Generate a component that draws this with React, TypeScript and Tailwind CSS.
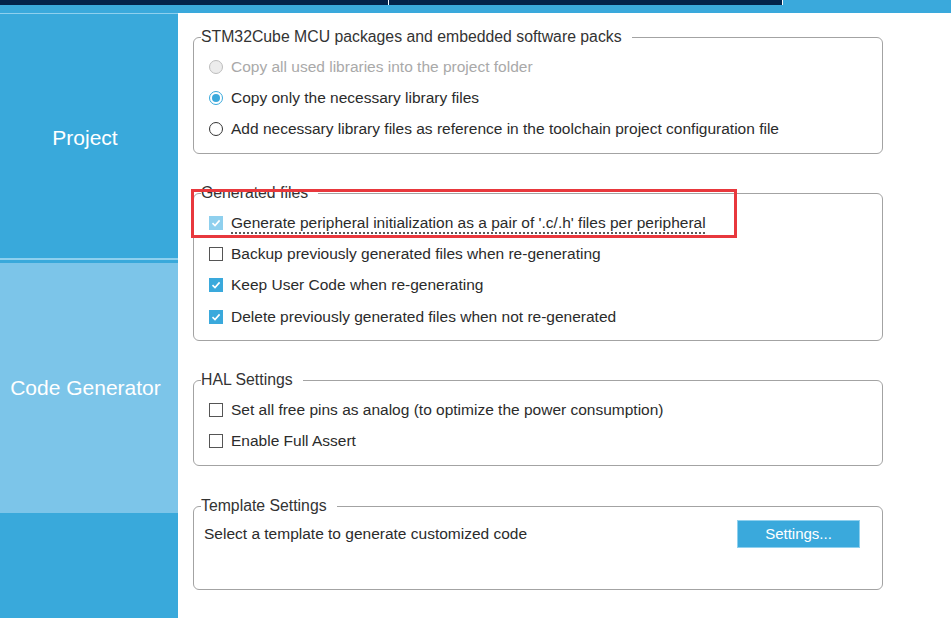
import React from "react";

/* ---------- small controls ---------- */
const Radio = ({ state }: { state: "off" | "on" | "disabled" }) => {
  if (state === "disabled")
    return <span className="w-[14px] h-[14px] rounded-full border border-[#bdbdbd] bg-[#ececec] shrink-0" />;
  if (state === "on")
    return (
      <span className="w-[14px] h-[14px] rounded-full border border-[#3aa9dc] bg-white shrink-0 flex items-center justify-center">
        <span className="w-[8px] h-[8px] rounded-full bg-[#3aa9dc]" />
      </span>
    );
  return <span className="w-[14px] h-[14px] rounded-full border border-[#333] bg-white shrink-0" />;
};

const Check = ({ state }: { state: "off" | "on" | "disabled" }) => {
  if (state === "off")
    return <span className="w-[14px] h-[14px] border border-[#555] bg-white shrink-0" />;
  return (
    <span
      className={
        "w-[14px] h-[14px] shrink-0 flex items-center justify-center " +
        (state === "on" ? "bg-[#3aa9dc]" : "bg-[#8fd0ee]")
      }
    >
      <svg width="10" height="10" viewBox="0 0 10 10">
        <path d="M1.5 5.2 L4 7.6 L8.6 2.4" fill="none" stroke="white" strokeWidth="1.6" />
      </svg>
    </span>
  );
};

const Row = ({ icon, children, dim }: { icon: React.ReactNode; children: React.ReactNode; dim?: boolean }) => (
  <div className={"h-[31px] flex items-center gap-[8px] pl-[15px] " + (dim ? "text-[#a9a9a9]" : "text-[#2b2b2b]")}>
    {icon}
    <span>{children}</span>
  </div>
);

const Group = ({ title, h, mt, children }: { title: string; h: string; mt: string; children: React.ReactNode }) => (
  <fieldset className={`w-[690px] border border-[#a3a3a3] rounded-[6px] ${h} ${mt}`}>
    <legend className="ml-[7px] pr-[10px] text-[15.8px] leading-[18px] text-[#333]">{title}</legend>
    {children}
  </fieldset>
);

/* ---------- App ---------- */
export default function App() {
  return (
    <div className="w-[951px] h-[618px] overflow-hidden bg-white font-['Liberation_Sans',Arial,sans-serif]">
      {/* top tabs */}
      <div className="flex h-[5px]">
        <div className="w-[388px] bg-[#03234b]" />
        <div className="w-[1px] bg-white" />
        <div className="w-[393px] bg-[#03234b]" />
        <div className="w-[1px] bg-white" />
        <div className="flex-1 bg-[#3aa9dc]" />
      </div>
      <div className="h-[8px] bg-[#3aa9dc]" />

      <div className="flex">
        {/* left nav */}
        <div className="w-[178px] h-[605px] bg-[#39a9db] flex flex-col text-white">
          <div className="h-[1px] bg-[#8fd0ee]" />
          <div className="h-[244px] flex items-center justify-center text-[21px] pt-[3px] pr-[8px]">Project</div>
          <div className="h-[2px] bg-[#8fd0ee]" />
          <div className="h-[3px]" />
          <div className="h-[250px] bg-[#7cc5e9] flex items-center justify-center text-[21px] pr-[7px]">
            Code Generator
          </div>
        </div>

        {/* content */}
        <div className="relative flex-1 pl-[15px] pt-[15px] text-[15.5px]">
          <Group title="STM32Cube MCU packages and embedded software packs" h="h-[126px]" mt="mt-0">
            <div className="pt-[5px]">
              <Row icon={<Radio state="disabled" />} dim>
                Copy all used libraries into the project folder
              </Row>
              <Row icon={<Radio state="on" />}>Copy only the necessary library files</Row>
              <Row icon={<Radio state="off" />}>
                Add necessary library files as reference in the toolchain project configuration file
              </Row>
            </div>
          </Group>

          <Group title="Generated files" h="h-[157px]" mt="mt-[30px]">
            <div className="pt-[5px]">
              <Row icon={<Check state="disabled" />}>
                <span className="underline decoration-dotted underline-offset-[5px]">
                  Generate peripheral initialization as a pair of '.c/.h' files per peripheral
                </span>
              </Row>
              <Row icon={<Check state="off" />}>Backup previously generated files when re-generating</Row>
              <Row icon={<Check state="on" />}>Keep User Code when re-generating</Row>
              <div className="pt-[1px]">
                <Row icon={<Check state="on" />}>Delete previously generated files when not re-generated</Row>
              </div>
            </div>
          </Group>

          <Group title="HAL Settings" h="h-[95px]" mt="mt-[30px]">
            <div className="pt-[5px]">
              <Row icon={<Check state="off" />}>Set all free pins as analog (to optimize the power consumption)</Row>
              <Row icon={<Check state="off" />}>Enable Full Assert</Row>
            </div>
          </Group>

          <Group title="Template Settings" h="h-[93px]" mt="mt-[31px]">
            <div className="pt-[5px] pl-[10px] pr-[22px] flex items-center justify-between text-[#2b2b2b]">
              <span>Select a template to generate customized code</span>
              <button className="w-[123px] h-[28px] bg-[#3aa9dc] border border-[#8fd0ee] text-white text-[15px]">
                Settings...
              </button>
            </div>
          </Group>

          {/* highlight */}
          <div className="absolute left-[13px] top-[176px] w-[546px] h-[49px] border-[3px] border-[#e8383d]" />
        </div>
      </div>
    </div>
  );
}
